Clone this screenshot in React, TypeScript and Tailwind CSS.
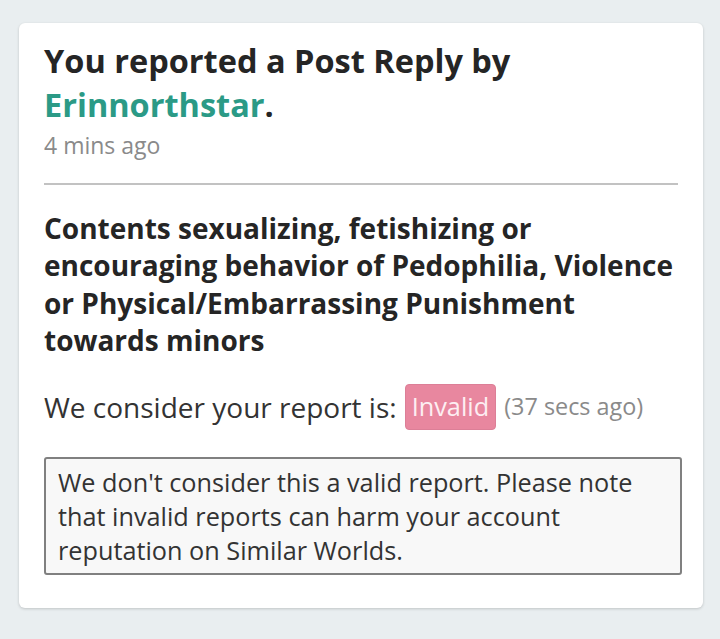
export default function App() {
  return (
    <div className="bg-[#e9eef0] min-h-[639px] w-[720px] pt-[23px] px-[19px] font-['Open_Sans',sans-serif]">
      <div className="bg-white rounded-[6px] shadow-[0_1px_3px_rgba(0,0,0,0.18)] px-[25px] pt-[16px] pb-[33px] w-[684px]">
        <h1 className="text-[32.5px] leading-[44px] font-bold text-[#252525]">
          You reported a Post Reply by{' '}
          <a href="#" className="text-[#2b9a86]">
            Erinnorthstar
          </a>
          .
        </h1>
        <div className="text-[23px] leading-[30px] text-[#8a8a8a] mt-[3px]">4 mins ago</div>
        <hr className="border-0 h-[2px] bg-[#c2c2c2] mt-[23px] mb-[25px]" />
        <p className="text-[28px] leading-[37.4px] font-bold text-[#252525]">
          Contents sexualizing, fetishizing or
          <br />
          encouraging behavior of Pedophilia, Violence
          <br />
          or Physical/Embarrassing Punishment
          <br />
          towards minors
        </p>
        <div className="flex items-center mt-[24px] text-[28px] text-[#333]">
          <span>We consider your report is:</span>
          <span className="ml-[8px] bg-[#e8879f] border border-[#dc7f97] rounded-[4px] text-[#fdeef2] h-[46px] flex items-center px-[6px] text-[25.3px]">
            Invalid
          </span>
          <span className="ml-[8px] text-[23.4px] text-[#8a8a8a]">(37 secs ago)</span>
        </div>
        <div className="mt-[27px] mr-[-4px] bg-[#f8f8f8] border-2 border-[#808080] rounded-[3px] px-[12px] py-[6px] text-[25.25px] leading-[34px] text-[#333]">
          We don't consider this a valid report. Please note that invalid reports can harm your
          account reputation on Similar Worlds.
        </div>
      </div>
    </div>
  )
}
